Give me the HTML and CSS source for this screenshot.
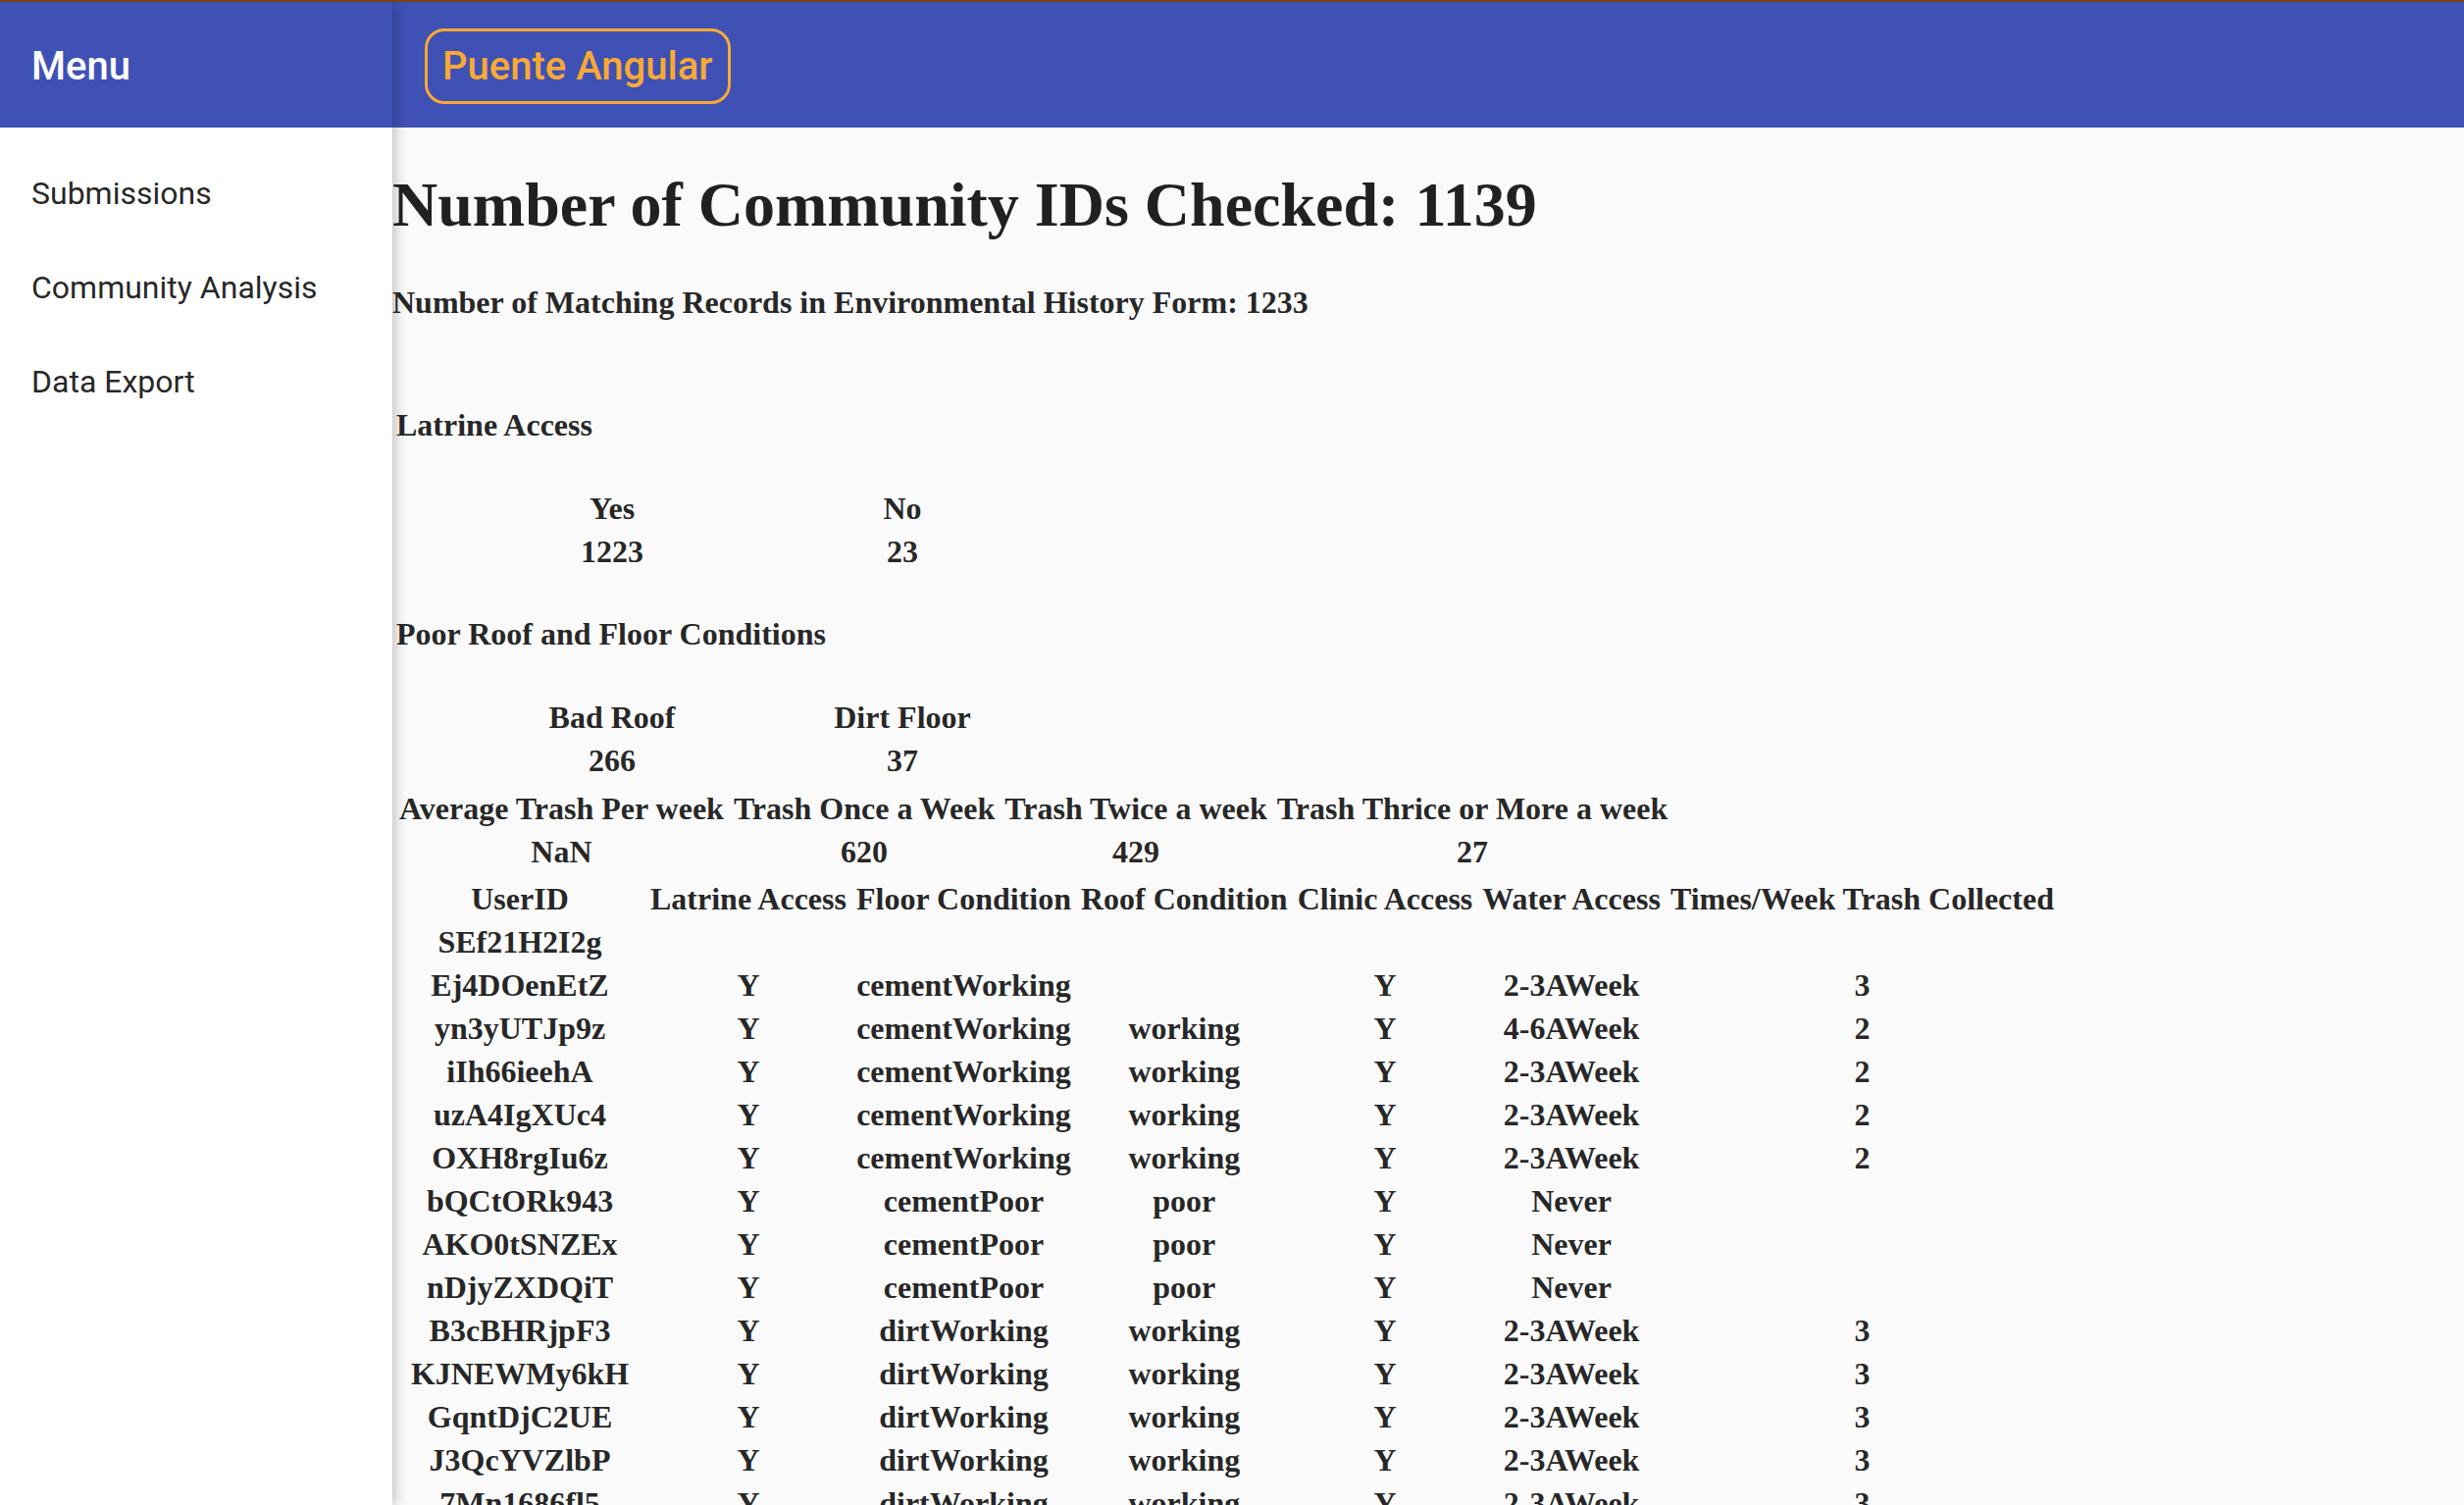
FILE: index.html
```html
<!DOCTYPE html>
<html lang="en">
<head>
<meta charset="utf-8">
<title>Puente Angular</title>
<link rel="stylesheet" href="styles.css">
</head>
<body>
<div class="app">
  <aside class="sidenav">
    <div class="toolbar side-toolbar"><span class="menu-title">Menu</span></div>
    <nav class="nav-list">
      <a class="nav-item">Submissions</a>
      <a class="nav-item">Community Analysis</a>
      <a class="nav-item">Data Export</a>
    </nav>
  </aside>
  <div class="main">
    <header class="toolbar main-toolbar">
      <button class="brand">Puente Angular</button>
    </header>
    <section class="content">
      <h1 class="title">Number of Community IDs Checked: 1139</h1>
      <h4 class="subtitle">Number of Matching Records in Environmental History Form: 1233</h4>

      <h4 class="section section-first">Latrine Access</h4>
      <table class="stat">
        <tr><td>Yes</td><td>No</td></tr>
        <tr><td>1223</td><td>23</td></tr>
      </table>

      <h4 class="section">Poor Roof and Floor Conditions</h4>
      <table class="stat stat-last">
        <tr><td>Bad Roof</td><td>Dirt Floor</td></tr>
        <tr><td>266</td><td>37</td></tr>
      </table>

      <table class="grid">
        <tr><td>Average Trash Per week</td><td>Trash Once a Week</td><td>Trash Twice a week</td><td>Trash Thrice or More a week</td></tr>
        <tr><td>NaN</td><td>620</td><td>429</td><td>27</td></tr>
      </table>

      <table class="grid records">
        <tr><td class="uid">UserID</td><td>Latrine Access</td><td>Floor Condition</td><td>Roof Condition</td><td>Clinic Access</td><td>Water Access</td><td>Times/Week Trash Collected</td></tr>
        <tr><td>SEf21H2I2g</td><td></td><td></td><td></td><td></td><td></td><td></td></tr>
        <tr><td>Ej4DOenEtZ</td><td>Y</td><td>cementWorking</td><td></td><td>Y</td><td>2-3AWeek</td><td>3</td></tr>
        <tr><td>yn3yUTJp9z</td><td>Y</td><td>cementWorking</td><td>working</td><td>Y</td><td>4-6AWeek</td><td>2</td></tr>
        <tr><td>iIh66ieehA</td><td>Y</td><td>cementWorking</td><td>working</td><td>Y</td><td>2-3AWeek</td><td>2</td></tr>
        <tr><td>uzA4IgXUc4</td><td>Y</td><td>cementWorking</td><td>working</td><td>Y</td><td>2-3AWeek</td><td>2</td></tr>
        <tr><td>OXH8rgIu6z</td><td>Y</td><td>cementWorking</td><td>working</td><td>Y</td><td>2-3AWeek</td><td>2</td></tr>
        <tr><td>bQCtORk943</td><td>Y</td><td>cementPoor</td><td>poor</td><td>Y</td><td>Never</td><td></td></tr>
        <tr><td>AKO0tSNZEx</td><td>Y</td><td>cementPoor</td><td>poor</td><td>Y</td><td>Never</td><td></td></tr>
        <tr><td>nDjyZXDQiT</td><td>Y</td><td>cementPoor</td><td>poor</td><td>Y</td><td>Never</td><td></td></tr>
        <tr><td>B3cBHRjpF3</td><td>Y</td><td>dirtWorking</td><td>working</td><td>Y</td><td>2-3AWeek</td><td>3</td></tr>
        <tr><td>KJNEWMy6kH</td><td>Y</td><td>dirtWorking</td><td>working</td><td>Y</td><td>2-3AWeek</td><td>3</td></tr>
        <tr><td>GqntDjC2UE</td><td>Y</td><td>dirtWorking</td><td>working</td><td>Y</td><td>2-3AWeek</td><td>3</td></tr>
        <tr><td>J3QcYVZlbP</td><td>Y</td><td>dirtWorking</td><td>working</td><td>Y</td><td>2-3AWeek</td><td>3</td></tr>
        <tr><td>7Mn1686fl5</td><td>Y</td><td>dirtWorking</td><td>working</td><td>Y</td><td>2-3AWeek</td><td>3</td></tr>
        <tr><td>Qp2WxR8kLm</td><td>Y</td><td>dirtWorking</td><td>working</td><td>Y</td><td>2-3AWeek</td><td>3</td></tr>
        <tr><td>Hc5TnV0aZe</td><td>Y</td><td>dirtWorking</td><td>working</td><td>Y</td><td>2-3AWeek</td><td>3</td></tr>
      </table>
    </section>
  </div>
</div>
</body>
</html>
```

FILE: styles.css
```css
html, body {
  margin: 0;
  height: 100%;
}

body {
  border-top: 2px solid #7d4210;
  box-sizing: border-box;
  overflow: hidden;
  font-family: "Liberation Serif", "Times New Roman", serif;
}

.app {
  display: flex;
  height: calc(100vh - 2px);
}

.sidenav {
  width: 400px;
  flex: none;
  background: #ffffff;
  position: relative;
  z-index: 2;
  box-shadow: 3px 0 12px rgba(0, 0, 0, 0.24);
  display: flex;
  flex-direction: column;
}

.toolbar {
  height: 128px;
  flex: none;
  background: #3f51b5;
  display: flex;
  align-items: center;
  padding: 3px 32px 0;
  box-sizing: border-box;
}

.menu-title {
  font-family: Roboto, "Liberation Sans", sans-serif;
  font-weight: 500;
  font-size: 40px;
  color: #ffffff;
}

.nav-list {
  padding-top: 19px;
  display: flex;
  flex-direction: column;
}

.nav-item {
  height: 96px;
  display: flex;
  align-items: center;
  padding: 0 32px;
  font-family: Roboto, "Liberation Sans", sans-serif;
  font-size: 32px;
  color: rgba(0, 0, 0, 0.87);
  cursor: pointer;
}

.main {
  flex: 1;
  min-width: 0;
  background: #fafafa;
  display: flex;
  flex-direction: column;
  overflow: hidden;
}

.brand {
  height: 77px;
  margin-left: 1px;
  border: 3px solid #f9a934;
  border-radius: 20px;
  background: transparent;
  color: #f9a934;
  font-family: Roboto, "Liberation Sans", sans-serif;
  font-weight: 500;
  font-size: 40px;
  padding: 0 16px 0 15px;
  cursor: pointer;
}

.content {
  color: rgba(0, 0, 0, 0.87);
  font-size: 32px;
}

.title {
  font-size: 64px;
  line-height: 74px;
  font-weight: bold;
  margin: 42px 0 0;
}

.subtitle {
  font-size: 32px;
  line-height: 37px;
  font-weight: bold;
  margin: 44px 0 0;
}

.section {
  font-size: 32px;
  line-height: 37px;
  font-weight: bold;
  margin: 42px 0 42px 4px;
}

.section-first {
  margin-top: 88px;
}

table {
  border-collapse: separate;
  border-spacing: 4px;
  font-size: 32px;
}

td {
  padding: 2px 3px;
  line-height: 36px;
  font-weight: bold;
  text-align: center;
  white-space: nowrap;
}

.stat {
  margin-left: 74px;
}

.stat td {
  width: 288px;
  padding: 2px;
}

.stat-last {
  margin-bottom: 1px;
}

.records .uid {
  width: 246px;
}
```
